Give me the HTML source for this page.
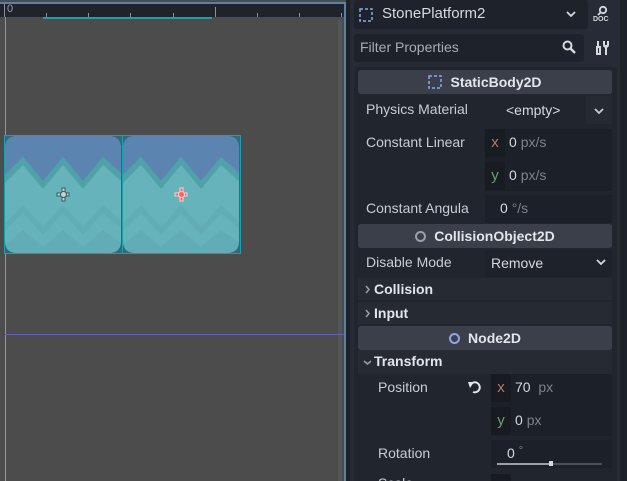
<!DOCTYPE html>
<html><head><meta charset="utf-8"><style>
*{margin:0;padding:0;box-sizing:border-box}
html,body{width:627px;height:481px;overflow:hidden}
body{background:#1d2128;font-family:"Liberation Sans","DejaVu Sans",sans-serif;position:relative}
.a{position:absolute}
.t{position:absolute;color:#c8ccd3;font-size:14px;white-space:nowrap}
.dim{color:#7d838c}
.hdr{position:absolute;left:358px;width:254px;height:24px;background:#3a3f4a;border-radius:3px;color:#e2e5ea;font-weight:bold;font-size:14px;text-align:center;line-height:24px}
.field{position:absolute;background:#1c2028}
.lab{position:absolute;background:#181b21;width:20px;height:28px;text-align:center;line-height:28px;font-size:15px}
</style></head><body>
<div class="a" style="left:0;top:0;width:346px;height:481px;background:#4c4c4c"></div>
<div class="a" style="left:0;top:2px;width:346px;height:2px;background:#5a7fa8"></div>
<div class="a" style="left:0;top:4px;width:344px;height:13px;background:#1f232b"></div>
<div class="t" style="left:7px;top:3px;font-size:11px;color:#9aa0a8">0</div>
<div class="a" style="left:4px;top:4px;width:1px;height:13px;background:#8a9099"></div>
<div class="a" style="left:46px;top:13px;width:1px;height:4px;background:#8a9099"></div>
<div class="a" style="left:88px;top:13px;width:1px;height:4px;background:#8a9099"></div>
<div class="a" style="left:130px;top:13px;width:1px;height:4px;background:#8a9099"></div>
<div class="a" style="left:173px;top:13px;width:1px;height:4px;background:#8a9099"></div>
<div class="a" style="left:215px;top:7px;width:1px;height:10px;background:#8a9099"></div>
<div class="a" style="left:257px;top:13px;width:1px;height:4px;background:#8a9099"></div>
<div class="a" style="left:299px;top:13px;width:1px;height:4px;background:#8a9099"></div>
<div class="a" style="left:341px;top:13px;width:1px;height:4px;background:#8a9099"></div>
<div class="a" style="left:43px;top:17px;width:169px;height:2px;background:#2a9aa8"></div>
<div class="a" style="left:338px;top:20px;width:4px;height:461px;background:#555"></div>
<div class="a" style="left:344px;top:2px;width:2px;height:479px;background:#5a7fa8"></div>
<div class="a" style="left:5px;top:17px;width:1px;height:318px;background:#8aa080"></div>
<div class="a" style="left:5px;top:335px;width:1px;height:146px;background:#8ab838"></div>
<div class="a" style="left:5px;top:334px;width:339px;height:1px;background:#5e5ebc"></div>
<svg class="a" style="left:4px;top:135px" width="238" height="120" viewBox="0 0 238 120">
<defs><g id="tile">
<rect x="0" y="0" width="118" height="119" fill="#2f6b78"/>
<rect x="1" y="1" width="116" height="117" rx="12" fill="#67b3bb"/>
<path d="M1 13 Q1 1 13 1 L105 1 Q117 1 117 13 L117 38 L99 22 L79 46 L59 22 L39 46 L19 22 L1 40 Z" fill="#5b84b0"/>
<path d="M1 40 L19 22 L39 46 L59 22 L79 46 L99 22 L117 38 L117 46 L99 30 L79 54 L59 30 L39 54 L19 30 L1 48 Z" fill="#4ea2a8"/>
<path d="M1 88 L19 70 L39 92 L59 70 L79 92 L99 70 L117 86 L117 94 L99 78 L79 100 L59 78 L39 100 L19 78 L1 96 Z" fill="#62adb5"/>
<path d="M1 106 L1 110 L19 95 L39 112 L59 95 L79 112 L99 95 L117 108 L117 106 Q117 118 105 118 L13 118 Q1 118 1 106Z" fill="#62adb5"/>
</g></defs>
<use href="#tile" x="0"/><use href="#tile" x="118"/>
<rect x="0.5" y="0.5" width="236" height="118" fill="none" stroke="#17a0b0"/>
<line x1="118.5" y1="0" x2="118.5" y2="119" stroke="#17a0b0"/>
<g stroke="#39585c" fill="#c0d4d4" stroke-width="1"><rect x="53" y="58" width="12" height="3"/><rect x="58" y="53" width="3" height="13"/><circle cx="59.5" cy="59.5" r="3"/></g>
<g fill="#ff6060" stroke="#ffd0d0"><rect x="171" y="58" width="12" height="3"/><rect x="176" y="53" width="3" height="13"/><circle cx="177.5" cy="59.5" r="3"/></g>
</svg>
<div class="a" style="left:350px;top:0;width:270px;height:481px;background:#262b35"></div>
<div class="a" style="left:354px;top:0;width:234px;height:29px;background:#1e222a;border-radius:3px"></div>
<svg class="a" style="left:359px;top:8px" width="14" height="14"><rect x="1" y="1" width="12" height="12" fill="none" stroke="#8da5f3" stroke-width="1.5" stroke-dasharray="3 2"/></svg>
<div class="t" style="left:382px;top:5px;font-size:15px;color:#d6d9de">StonePlatform2</div>
<svg class="a" style="left:566px;top:11px" width="10" height="7"><path d="M1 1l4 4 4-4" fill="none" stroke="#d6d9de" stroke-width="1.8"/></svg>
<svg class="a" style="left:592px;top:5px" width="20" height="20"><circle cx="11" cy="5" r="3.2" fill="none" stroke="#d6d9de" stroke-width="1.8"/><line x1="8.5" y1="7.5" x2="6" y2="10" stroke="#d6d9de" stroke-width="1.8"/></svg>
<div class="t" style="left:593px;top:16px;font-size:7px;font-weight:bold;color:#d6d9de">DOC</div>
<div class="a" style="left:354px;top:34px;width:230px;height:28px;background:#1e222a;border-radius:3px"></div>
<div class="t" style="left:360px;top:39px;font-size:14px;color:#a8adb5">Filter Properties</div>
<svg class="a" style="left:562px;top:40px" width="14" height="14"><circle cx="5.5" cy="5.5" r="4" fill="none" stroke="#d6d9de" stroke-width="2"/><line x1="8.5" y1="8.5" x2="13" y2="13" stroke="#d6d9de" stroke-width="2.5"/></svg>
<svg class="a" style="left:595px;top:40px" width="14" height="16"><path d="M3 1v6M2 7h3v7h-3z" stroke="#d6d9de" stroke-width="2" fill="none"/><path d="M9 1v4a2 2 0 0 0 4 0V1M11 5v10" stroke="#d6d9de" stroke-width="2" fill="none"/></svg>
<div class="a" style="left:354px;top:67px;width:263px;height:414px;background:#21252d;border-radius:3px 3px 0 0"></div>
<div class="a" style="left:620px;top:0;width:7px;height:481px;background:#1d2128"></div>

<div class="hdr" style="top:70px"><svg style="vertical-align:-2px;margin-right:8px" width="14" height="14"><rect x="1" y="1" width="12" height="12" fill="none" stroke="#8da5f3" stroke-width="1.5" stroke-dasharray="3 2"/></svg>StaticBody2D</div>
<div class="t" style="left:366px;top:101px">Physics Material</div>
<div class="t" style="left:506px;top:102px;color:#d6d9de">&lt;empty&gt;</div>
<div class="a" style="left:586px;top:96px;width:26px;height:28px;background:#262b33"></div>
<svg class="a" style="left:594px;top:108px" width="10" height="7"><path d="M1 1l4 4 4-4" fill="none" stroke="#c8ccd3" stroke-width="1.8"/></svg>
<div class="t" style="left:366px;top:134px">Constant Linear</div>
<div class="field" style="left:485px;top:129px;width:127px;height:62px"></div>
<div class="lab" style="left:485px;top:129px;color:#b07a68">x</div>
<div class="t" style="left:509px;top:134px;color:#d6d9de">0 <span class="dim">px/s</span></div>
<div class="lab" style="left:485px;top:162px;color:#6aa070">y</div>
<div class="t" style="left:509px;top:167px;color:#d6d9de">0 <span class="dim">px/s</span></div>
<div class="t" style="left:366px;top:200px">Constant Angula</div>
<div class="field" style="left:485px;top:195px;width:127px;height:28px"></div>
<div class="t" style="left:500px;top:200px;color:#d6d9de">0 <span class="dim">°/s</span></div>
<div class="hdr" style="top:224px"><span style="display:inline-block;width:11px;height:11px;border:2px solid #9aa0a8;border-radius:50%;margin-right:8px;vertical-align:-1px"></span>CollisionObject2D</div>
<div class="field" style="left:485px;top:250px;width:127px;height:27px;background:#1e222a"></div>
<div class="t" style="left:366px;top:254px">Disable Mode</div>
<div class="t" style="left:491px;top:255px;color:#d6d9de">Remove</div>
<svg class="a" style="left:596px;top:259px" width="10" height="7"><path d="M1 1l4 4 4-4" fill="none" stroke="#d6d9de" stroke-width="1.8"/></svg>
<div class="a" style="left:358px;top:278px;width:254px;height:22px;background:#262b33"></div>
<svg class="a" style="left:365px;top:285px" width="6" height="9"><path d="M1 1l3 3.5-3 3.5" fill="none" stroke="#9aa0a8" stroke-width="1.5"/></svg>
<div class="t" style="left:374px;top:281px;font-weight:bold;color:#e2e5ea">Collision</div>
<div class="a" style="left:358px;top:302px;width:254px;height:22px;background:#262b33"></div>
<svg class="a" style="left:365px;top:309px" width="6" height="9"><path d="M1 1l3 3.5-3 3.5" fill="none" stroke="#9aa0a8" stroke-width="1.5"/></svg>
<div class="t" style="left:374px;top:305px;font-weight:bold;color:#e2e5ea">Input</div>
<div class="hdr" style="top:326px"><span style="display:inline-block;width:11px;height:11px;border:2px solid #8da5f3;border-radius:50%;margin-right:8px;vertical-align:-1px"></span>Node2D</div>
<div class="a" style="left:358px;top:350px;width:254px;height:24px;background:#262b33"></div>
<svg class="a" style="left:363px;top:360px" width="9" height="6"><path d="M1 1l3.5 3 3.5-3" fill="none" stroke="#9aa0a8" stroke-width="1.5"/></svg>
<div class="t" style="left:374px;top:353px;font-weight:bold;color:#e2e5ea">Transform</div>
<div class="t" style="left:378px;top:379px">Position</div>
<svg class="a" style="left:467px;top:380px" width="14" height="14"><path d="M4 4A5 5 0 1 1 6 12" fill="none" stroke="#e2e5ea" stroke-width="2"/><path d="M1 2L7 2 3 8Z" fill="#e2e5ea"/></svg>
<div class="field" style="left:491px;top:374px;width:121px;height:62px"></div>
<div class="lab" style="left:491px;top:374px;color:#b07a68">x</div>
<div class="t" style="left:515px;top:379px;color:#d6d9de">70 <span class="dim">&nbsp;px</span></div>
<div class="lab" style="left:491px;top:407px;color:#6aa070">y</div>
<div class="t" style="left:515px;top:412px;color:#d6d9de">0 <span class="dim">px</span></div>
<div class="t" style="left:378px;top:445px">Rotation</div>
<div class="field" style="left:491px;top:440px;width:121px;height:28px"></div>
<div class="t" style="left:507px;top:445px;color:#d6d9de">0 <span class="dim" style="font-size:11px;vertical-align:4px">°</span></div>
<div class="a" style="left:497px;top:463px;width:105px;height:2px;background:#4a4f58"></div>
<div class="a" style="left:497px;top:463px;width:54px;height:2px;background:#9aa0a8"></div>
<div class="a" style="left:549px;top:461px;width:4px;height:5px;background:#d6d9de"></div>
<div class="t" style="left:378px;top:475px">Scale</div>
<div class="field" style="left:491px;top:474px;width:20px;height:7px;background:#181b21"></div>
</body></html>
